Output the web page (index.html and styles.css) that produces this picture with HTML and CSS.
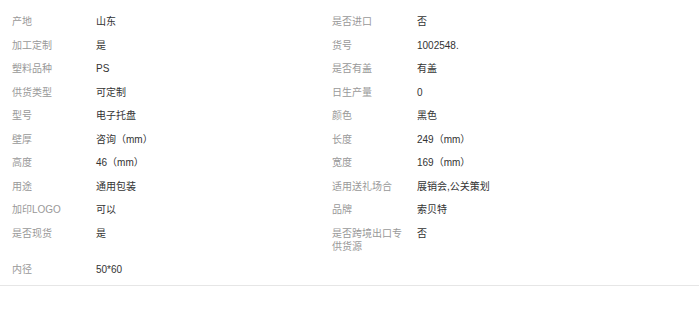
FILE: index.html
```html
<!DOCTYPE html>
<html lang="zh-CN">
<head>
<meta charset="utf-8">
<link rel="stylesheet" href="styles.css">
</head>
<body>
<div class="specs">
  <div class="label">产地</div><div class="value">山东</div>
  <div class="label">是否进口</div><div class="value">否</div>

  <div class="label">加工定制</div><div class="value">是</div>
  <div class="label">货号</div><div class="value">1002548.</div>

  <div class="label">塑料品种</div><div class="value">PS</div>
  <div class="label">是否有盖</div><div class="value">有盖</div>

  <div class="label">供货类型</div><div class="value">可定制</div>
  <div class="label">日生产量</div><div class="value">0</div>

  <div class="label">型号</div><div class="value">电子托盘</div>
  <div class="label">颜色</div><div class="value">黑色</div>

  <div class="label">壁厚</div><div class="value">咨询（mm）</div>
  <div class="label">长度</div><div class="value">249（mm）</div>

  <div class="label">高度</div><div class="value">46（mm）</div>
  <div class="label">宽度</div><div class="value">169（mm）</div>

  <div class="label">用途</div><div class="value">通用包装</div>
  <div class="label">适用送礼场合</div><div class="value">展销会,公关策划</div>

  <div class="label">加印LOGO</div><div class="value">可以</div>
  <div class="label">品牌</div><div class="value">索贝特</div>

  <div class="label">是否现货</div><div class="value">是</div>
  <div class="label">是否跨境出口专供货源</div><div class="value">否</div>

  <div class="label">内径</div><div class="value">50*60</div>
</div>
</body>
</html>
```
FILE: styles.css
```css
html, body {
  margin: 0;
  padding: 0;
  background: #fff;
}
.specs {
  display: grid;
  grid-template-columns: 84px 236px 85px 1fr;
  padding: 10px 0 3px 12px;
  border-bottom: 1px solid #e6e6e6;
  font-family: "Liberation Sans", "Noto Sans CJK SC", sans-serif;
  font-size: 10px;
  line-height: 13px;
}
.label, .value {
  padding: 5px 0 5.5px;
}
.label {
  color: #999;
  padding-right: 12px;
}
.value {
  color: #333;
}
```
